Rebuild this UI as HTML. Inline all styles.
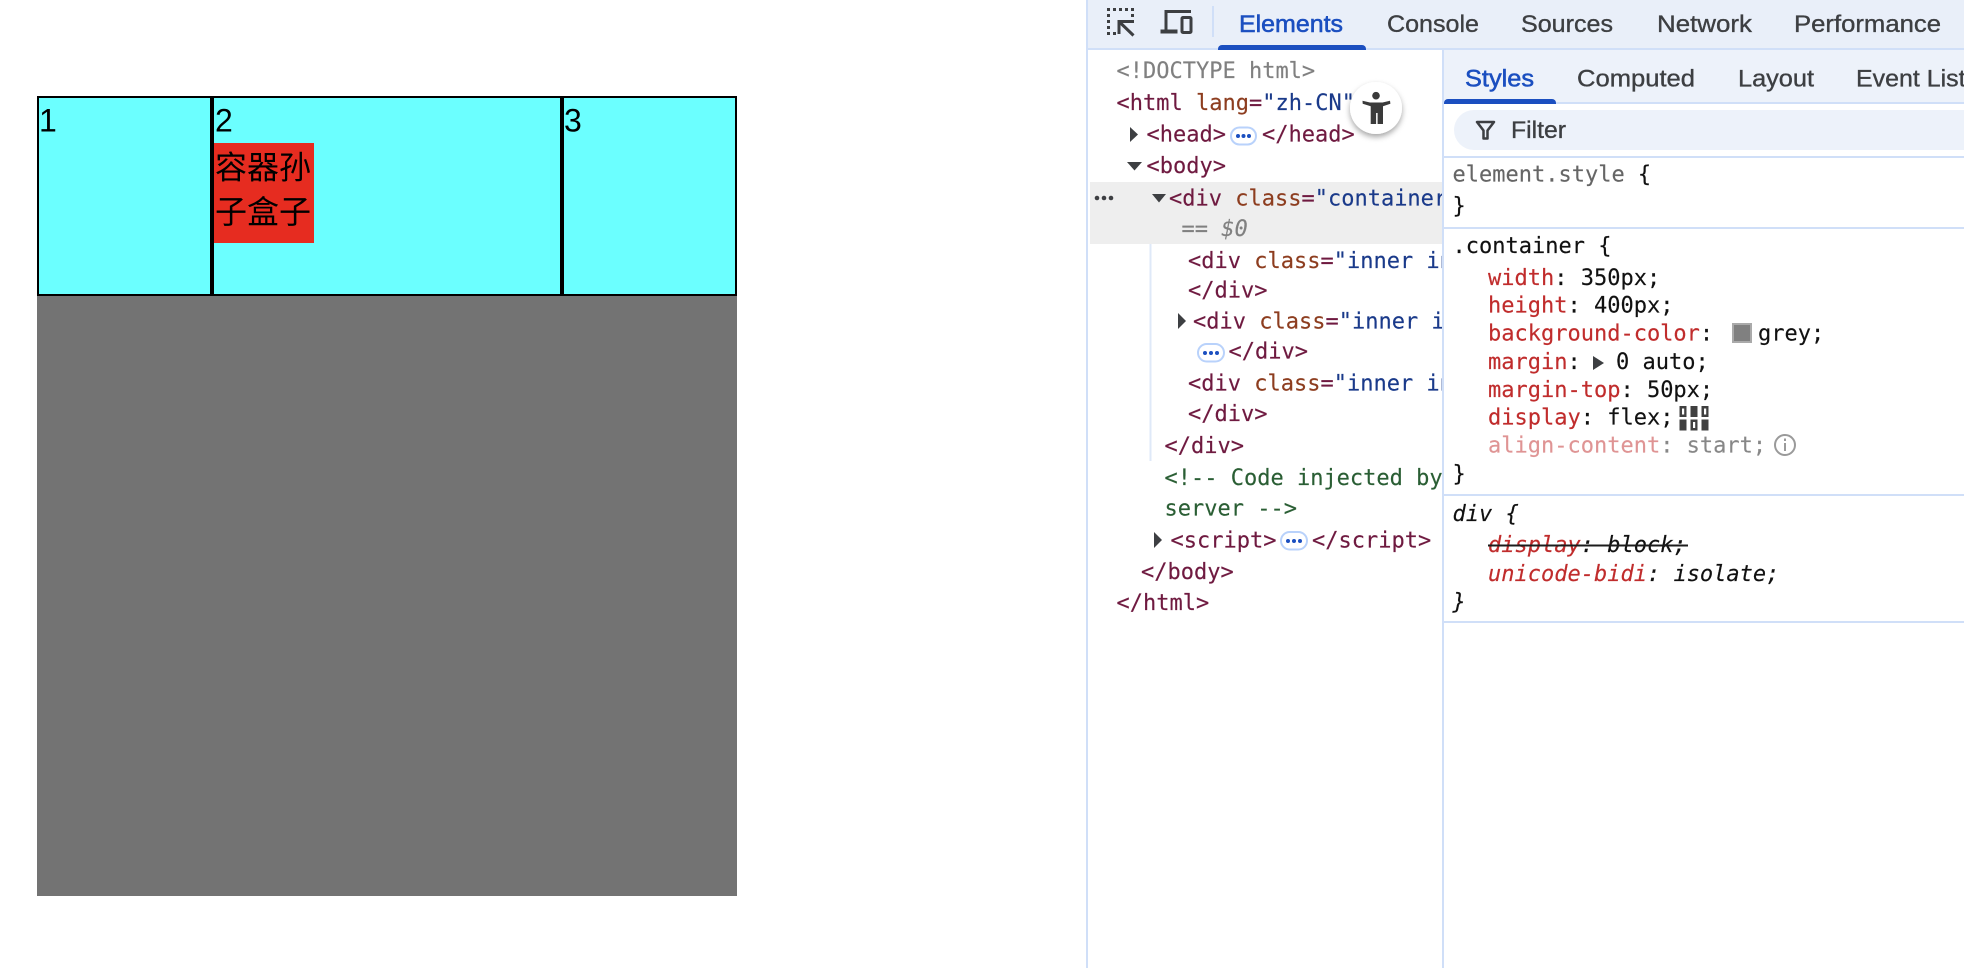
<!DOCTYPE html>
<html lang="zh-CN">
<head>
<meta charset="utf-8">
<title>Flex DevTools</title>
<style>
html,body{margin:0;padding:0;background:#fff;width:1964px;height:968px;overflow:hidden}
svg{display:block}
.ui{font-family:"Liberation Sans",sans-serif;font-size:24px;fill:#3d3f42;stroke:#3d3f42;stroke-width:.35}
.act{fill:#1b4fc0;stroke:#1b4fc0;stroke-width:.55}
.m{font-family:"DejaVu Sans Mono","Liberation Mono",monospace;font-size:22px;fill:#111;stroke:#111;stroke-width:.15}
.t{fill:#6f1a40;stroke:#6f1a40}.a{fill:#8d3d1f;stroke:#8d3d1f}.v{fill:#1a3a8a;stroke:#1a3a8a}.g{fill:#808080;stroke:#808080}.c{fill:#2a5e34;stroke:#2a5e34}.p{fill:#c02c2c;stroke:#c02c2c}
.i{font-style:italic}
.big{font-family:"Liberation Sans","Noto Sans CJK SC",sans-serif;font-size:32px;fill:#000}
</style>
</head>
<body>
<svg width="1964" height="968" viewBox="0 0 1964 968" xmlns="http://www.w3.org/2000/svg">
<defs>
<clipPath id="el"><rect x="1088" y="50" width="354" height="918"/></clipPath>
<filter id="sh" x="-40%" y="-40%" width="180%" height="180%"><feDropShadow dx="0" dy="3" stdDeviation="3" flood-color="#000" flood-opacity=".35"/></filter>
</defs>

<!-- page -->
<rect x="37" y="96" width="700" height="800" fill="#737373"/>
<g fill="#6bffff" stroke="#000" stroke-width="2">
<rect x="38" y="97" width="173" height="198"/>
<rect x="213" y="97" width="348" height="198"/>
<rect x="563" y="97" width="173" height="198"/>
</g>
<rect x="214" y="143" width="100" height="100" fill="#e62c20"/>
<text class="big" x="39" y="131.500">1</text>
<text class="big" x="215" y="131.500">2</text>
<text class="big" x="564" y="131.500">3</text>
<text class="big" x="215" y="178.500">容器孙</text>
<text class="big" x="215" y="223">子盒子</text>

<!-- devtools chrome -->
<rect x="1086" y="0" width="878" height="49" fill="#e9eff9"/>
<rect x="1088" y="48" width="876" height="2" fill="#d0dff8"/>
<rect x="1086" y="0" width="2" height="968" fill="#d0dff8"/>
<rect x="1444" y="50" width="520" height="52" fill="#edf2fa"/>
<rect x="1442" y="50" width="2" height="918" fill="#d0dff8"/>
<rect x="1444" y="102" width="520" height="2" fill="#d0dff8"/>

<!-- inspect icon -->
<g fill="#3d3f42">
<rect x="1107" y="8" width="3" height="3"/><rect x="1113" y="8" width="3" height="3"/><rect x="1119" y="8" width="3" height="3"/><rect x="1125" y="8" width="3" height="3"/><rect x="1131" y="8" width="3" height="3"/>
<rect x="1107" y="14" width="3" height="3"/><rect x="1107" y="20" width="3" height="3"/><rect x="1107" y="26" width="3" height="3"/><rect x="1107" y="32" width="3" height="3"/>
<rect x="1131" y="14" width="3" height="3"/>
<rect x="1113" y="32" width="3" height="3"/>
</g>
<path d="M1119 34V21.500h15M1119.500 22l14 13.500" fill="none" stroke="#3d3f42" stroke-width="3"/>
<!-- device icon -->
<path d="M1166 32V11.500h25" fill="none" stroke="#3d3f42" stroke-width="3"/>
<rect x="1160.500" y="29.500" width="17" height="4" fill="#3d3f42"/>
<rect x="1182" y="17.500" width="9" height="15" rx="1" fill="none" stroke="#3d3f42" stroke-width="3"/>
<rect x="1212" y="6" width="2" height="31" fill="#d0dff8"/>

<!-- main tabs -->
<text class="ui act" x="1239" y="32" textLength="104" lengthAdjust="spacingAndGlyphs">Elements</text>
<text class="ui" x="1387" y="32" textLength="92" lengthAdjust="spacingAndGlyphs">Console</text>
<text class="ui" x="1521" y="32" textLength="92" lengthAdjust="spacingAndGlyphs">Sources</text>
<text class="ui" x="1657" y="32" textLength="95" lengthAdjust="spacingAndGlyphs">Network</text>
<text class="ui" x="1794" y="32" textLength="147" lengthAdjust="spacingAndGlyphs">Performance</text>
<path d="M1218 50v-1a4 4 0 0 1 4-4h140a4 4 0 0 1 4 4v1z" fill="#1b4fc0"/>

<!-- elements panel -->
<rect x="1090" y="182" width="352" height="62" fill="#eeeeee"/>
<rect x="1149.500" y="244" width="2" height="217" fill="#dfe9f8"/>
<g fill="#3d3f42">
<circle cx="1097" cy="198" r="2.300"/><circle cx="1104" cy="198" r="2.300"/><circle cx="1111" cy="198" r="2.300"/>
<path d="M1130 127l8 7.500-8 7.500z"/>
<path d="M1127 162h15l-7.500 8.500z"/>
<path d="M1152 194h14l-7 8.500z"/>
<path d="M1178 313l8 8-8 8z"/>
<path d="M1154 532l8 8-8 8z"/>
</g>
<g clip-path="url(#el)">
<text class="m g" x="1116.500" y="78">&lt;!DOCTYPE html&gt;</text>
<text class="m" x="1116.500" y="110"><tspan class="t">&lt;html </tspan><tspan class="a">lang</tspan><tspan class="t">=</tspan><tspan class="v">"zh-CN"</tspan><tspan class="t">&gt;</tspan></text>
<text class="m t" x="1146.500" y="141.500">&lt;head&gt;</text>
<text class="m t" x="1262" y="141.500">&lt;/head&gt;</text>
<text class="m t" x="1146.500" y="173">&lt;body&gt;</text>
<text class="m" x="1169" y="205.500"><tspan class="t">&lt;div </tspan><tspan class="a">class</tspan><tspan class="t">=</tspan><tspan class="v">"container"</tspan><tspan class="t">&gt;</tspan></text>
<text class="m g" x="1181.500" y="236">== <tspan class="i">$0</tspan></text>
<text class="m" x="1188" y="268"><tspan class="t">&lt;div </tspan><tspan class="a">class</tspan><tspan class="t">=</tspan><tspan class="v">"inner inner1"</tspan><tspan class="t">&gt;</tspan></text>
<text class="m t" x="1188" y="297.500">&lt;/div&gt;</text>
<text class="m" x="1193" y="328.500"><tspan class="t">&lt;div </tspan><tspan class="a">class</tspan><tspan class="t">=</tspan><tspan class="v">"inner inner2"</tspan><tspan class="t">&gt;</tspan></text>
<text class="m t" x="1228.500" y="358.500">&lt;/div&gt;</text>
<text class="m" x="1188" y="390.500"><tspan class="t">&lt;div </tspan><tspan class="a">class</tspan><tspan class="t">=</tspan><tspan class="v">"inner inner3"</tspan><tspan class="t">&gt;</tspan></text>
<text class="m t" x="1188" y="421">&lt;/div&gt;</text>
<text class="m t" x="1164.500" y="453">&lt;/div&gt;</text>
<text class="m c" x="1164.500" y="485">&lt;!-- Code injected by live-</text>
<text class="m c" x="1164.500" y="515.500">server --&gt;</text>
<text class="m t" x="1170.500" y="547.500">&lt;script&gt;</text>
<text class="m t" x="1312" y="547.500">&lt;/script&gt;</text>
<text class="m t" x="1141" y="579">&lt;/body&gt;</text>
<text class="m t" x="1116.500" y="610">&lt;/html&gt;</text>
</g>
<!-- ellipsis buttons -->
<g>
<rect x="1231" y="127.500" width="25" height="17" rx="8.500" fill="#fff" stroke="#b9d2fb" stroke-width="2"/>
<g fill="#1b4fc0"><circle cx="1238" cy="136" r="2"/><circle cx="1243.500" cy="136" r="2"/><circle cx="1249" cy="136" r="2"/></g>
<rect x="1198" y="344" width="26" height="17.500" rx="8.700" fill="#fff" stroke="#b9d2fb" stroke-width="2"/>
<g fill="#1b4fc0"><circle cx="1205" cy="353" r="2"/><circle cx="1211" cy="353" r="2"/><circle cx="1217" cy="353" r="2"/></g>
<rect x="1281" y="532" width="26" height="17.500" rx="8.700" fill="#fff" stroke="#b9d2fb" stroke-width="2"/>
<g fill="#1b4fc0"><circle cx="1288" cy="541" r="2"/><circle cx="1294" cy="541" r="2"/><circle cx="1300" cy="541" r="2"/></g>
</g>
<!-- accessibility button -->
<circle cx="1376" cy="108" r="26" fill="#fff" filter="url(#sh)"/>
<circle cx="1376" cy="95.700" r="3.800" fill="#3a3a3a"/>
<path fill="#3a3a3a" d="M1362.500 100.800l7.500 1.700h12.500l7.500-1.700.4 3-7.400 2.400v17.800h-5.400v-11h-1.500v11h-5.400v-17.800l-8-2.400z"/>

<!-- sidebar -->
<text class="ui act" x="1465" y="86.500" textLength="69" lengthAdjust="spacingAndGlyphs">Styles</text>
<text class="ui" x="1577" y="86.500" textLength="118" lengthAdjust="spacingAndGlyphs">Computed</text>
<text class="ui" x="1738" y="86.500" textLength="76" lengthAdjust="spacingAndGlyphs">Layout</text>
<text class="ui" x="1856" y="86.500" textLength="172" lengthAdjust="spacingAndGlyphs">Event Listeners</text>
<path d="M1444 104v-1a4 4 0 0 1 4-4h104a4 4 0 0 1 4 4v1z" fill="#1b4fc0"/>

<path d="M1964 110h-490a20 20 0 0 0 0 40h490z" fill="#edf2fa"/>
<path d="M1477 122h17l-6.500 8.500v8h-4v-8z" fill="none" stroke="#3d3f42" stroke-width="2.500" stroke-linejoin="round"/>
<text class="ui" x="1511" y="138" textLength="55" lengthAdjust="spacingAndGlyphs">Filter</text>
<rect x="1444" y="156" width="520" height="2" fill="#d0dff8"/>

<text class="m" x="1452.500" y="181.500"><tspan fill="#666" stroke="#666">element.style</tspan> {</text>
<text class="m" x="1452.500" y="213">}</text>
<rect x="1444" y="227" width="520" height="2" fill="#d0dff8"/>

<text class="m" x="1452.500" y="253">.container {</text>
<text class="m" x="1488" y="285"><tspan class="p">width</tspan>: 350px;</text>
<text class="m" x="1488" y="312.500"><tspan class="p">height</tspan>: 400px;</text>
<text class="m" x="1488" y="340.500"><tspan class="p">background-color</tspan>:</text>
<rect x="1733" y="324" width="18" height="18" fill="#808080" stroke="#aaa" stroke-width="2"/>
<text class="m" x="1758" y="340.500">grey;</text>
<text class="m" x="1488" y="369"><tspan class="p">margin</tspan>:</text>
<path d="M1593 356l11 7-11 7z" fill="#3d3f42"/>
<text class="m" x="1616" y="369">0 auto;</text>
<text class="m" x="1488" y="397"><tspan class="p">margin-top</tspan>: 50px;</text>
<text class="m" x="1488" y="424.500"><tspan class="p">display</tspan>: flex;</text>
<g fill="#404040">
<path fill-rule="evenodd" d="M1679.500 406h7v11h-7zM1682 408.500v6h2.200v-6zM1701.500 406h7v11h-7zM1704 408.500v6h2.200v-6z"/>
<rect x="1690.500" y="406" width="7" height="11"/>
<rect x="1679.500" y="419.500" width="7" height="11"/>
<rect x="1701.500" y="419.500" width="7" height="11"/>
<path fill-rule="evenodd" d="M1690.500 419.500h7v11h-7zM1693 422v6h2.200v-6z"/>
</g>
<text class="m" x="1488" y="452.500" opacity=".5"><tspan class="p">align-content</tspan>: start;</text>
<circle cx="1785" cy="445" r="10" fill="none" stroke="#9a9a9a" stroke-width="2"/>
<rect x="1784" y="443" width="2" height="8" fill="#9a9a9a"/>
<rect x="1784" y="438.500" width="2" height="2.500" fill="#9a9a9a"/>
<text class="m" x="1452.500" y="481">}</text>
<rect x="1444" y="494" width="520" height="2" fill="#d0dff8"/>

<text class="m i" x="1452.500" y="521">div {</text>
<text class="m i" x="1488" y="552"><tspan class="p">display</tspan>: block;</text>
<rect x="1488" y="544.500" width="200" height="2" fill="#1c1c1c"/>
<text class="m i" x="1488" y="581"><tspan class="p">unicode-bidi</tspan>: isolate;</text>
<text class="m i" x="1452.500" y="609">}</text>
<rect x="1444" y="621" width="520" height="2" fill="#d0dff8"/>
</svg>
</body>
</html>
